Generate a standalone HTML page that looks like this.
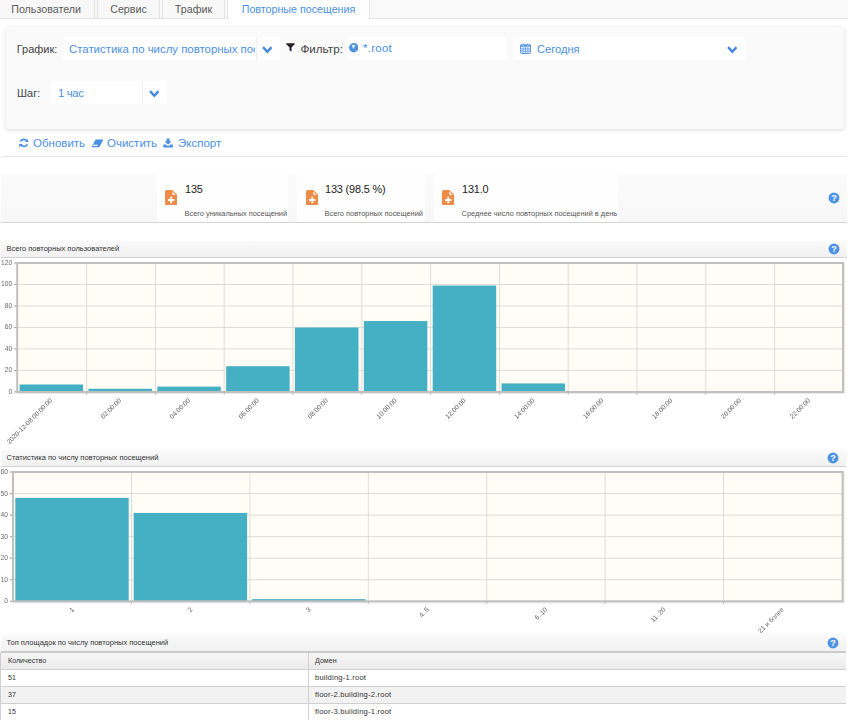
<!DOCTYPE html>
<html lang="ru">
<head>
<meta charset="utf-8">
<title>Повторные посещения</title>
<style>
*{box-sizing:border-box}
html,body{margin:0;padding:0;background:#fff}
body{width:848px;height:722px;overflow:hidden;position:relative;font-family:"Liberation Sans",sans-serif;font-size:11px;color:#444}
.abs{position:absolute}
/* tabs */
.tabstrip{position:absolute;left:0;top:0;width:848px;height:19px;background:#f9f9f9;border-bottom:1px solid #e4e4e4}
.tab{position:absolute;top:-4px;height:22px;background:#f8f8f8;border:1px solid #e2e2e2;border-bottom:none;border-radius:4px 4px 0 0;color:#5a5a5a;font-size:10.7px;line-height:25px;text-align:center;white-space:nowrap}
.tab.active{background:#fff;color:#4a90e2;height:23px}
/* filter panel */
.panel{position:absolute;left:6px;top:27px;width:838px;height:102px;background:#fafafa;border-radius:3px;box-shadow:0 1px 4px rgba(0,0,0,.15)}
.lbl{position:absolute;font-size:11px;color:#444;white-space:nowrap;line-height:14px}
.inp{position:absolute;background:#fff;border-radius:3px;height:23px;color:#4a90e2;font-size:11.4px;line-height:24.4px;white-space:nowrap;overflow:hidden}
.sep{position:absolute;top:0;width:1px;height:23px;background:#efefef}
.link{position:absolute;color:#4a90e2;font-size:11.5px;white-space:nowrap;line-height:14px}
/* stats */
.stats{position:absolute;left:1px;top:174px;width:846px;height:49px;background:linear-gradient(#fbfbfb,#f7f7f7);border-bottom:1px solid #d5d5d5}
.card{position:absolute;top:0;height:48px;background:#fefefe;border-radius:3px}
.card .num{position:absolute;left:28px;top:7.6px;font-size:10.9px;letter-spacing:-.15px;color:#222;line-height:14px;white-space:nowrap}
.card .sub{position:absolute;left:27.6px;top:35px;font-size:7.4px;color:#555;line-height:9px;white-space:nowrap}
.hdr{position:absolute;left:1px;width:845px;height:17px;background:linear-gradient(#fafafa,#f1f1f1);border-bottom:1px solid #d2d2d2;font-size:7.5px;color:#333;line-height:15px;padding-left:5.5px;white-space:nowrap}
.help{position:absolute;width:12px;height:12px}
svg text{font-family:"Liberation Sans",sans-serif}
/* table */
.tbl{position:absolute;left:0;top:652px;width:846px;height:68px;font-size:7.1px;color:#333;border-left:1px solid #cfcfcf}
.tr{position:absolute;left:0;width:845px;height:17px;border-bottom:1px solid #d0d0d0;line-height:16.5px}
.tr.h{height:18px;line-height:16.6px;border-top:1px solid #cbcbcb;background:linear-gradient(#f6f6f6,#ebebeb)}
.tr .c1{position:absolute;left:7px;top:0;white-space:nowrap}
.tr .c2{position:absolute;left:314px;top:0;white-space:nowrap}
.tr .dv{position:absolute;left:307px;top:0;width:1px;height:100%;background:#d0d0d0}
</style>
</head>
<body>

<!-- TABS -->
<div class="tabstrip">
  <div class="tab" style="left:-2.4px;width:97px">Пользователи</div>
  <div class="tab" style="left:97px;width:63px">Сервис</div>
  <div class="tab" style="left:162px;width:63px">Трафик</div>
  <div class="tab active" style="left:227px;width:143px">Повторные посещения</div>
</div>

<!-- FILTER PANEL -->
<div class="panel"></div>
<div class="lbl" style="left:16.7px;top:41.6px">График:</div>
<div class="inp" style="left:63px;top:37px;width:217px;padding-left:6px">
  <span style="display:inline-block;width:186px;overflow:hidden;vertical-align:top">Статистика по числу повторных посещений</span>
  <div class="sep" style="left:193px"></div>
  <svg class="abs" style="left:198.6px;top:8.8px" width="10.6" height="8" viewBox="0 0 10 7.2" preserveAspectRatio="none"><path d="M0.2 1.9 L1.8 0.3 L5 3.5 L8.2 0.3 L9.8 1.9 L5 6.7 Z" fill="#4288de"/></svg>
</div>
<svg class="abs" style="left:286px;top:43px" width="9" height="9" viewBox="0 0 9 9"><path d="M0.3 0.3 H8.7 V1.2 L5.5 4.6 V8.7 L3.5 7.2 V4.6 L0.3 1.2 Z" fill="#222"/></svg>
<div class="lbl" style="left:300.4px;top:41.6px;font-size:11.7px">Фильтр:</div>
<div class="inp" style="left:348px;top:37px;width:159px;padding-left:15px">
  <svg class="abs" style="left:0.6px;top:6.4px" width="9.5" height="9.5" viewBox="0 0 9.5 9.5"><circle cx="4.75" cy="4.75" r="4.7" fill="#4a90e2"/><path d="M3 2 C3.8 1.5 4.6 2.5 5.6 1.9 C6.6 2.2 6.4 3.2 5.7 3.8 C5.2 4.5 4.9 5.6 4.1 6 C3.5 5.3 3.9 4.4 3.2 3.8 C2.6 3.2 2.5 2.5 3 2 Z" fill="#fff" opacity=".8"/><path d="M5.9 7.3 C6.3 6.9 7 7 7.3 7.3 C7 7.9 6.2 8 5.9 7.3Z" fill="#fff" opacity=".75"/></svg>
  <span style="letter-spacing:.3px;position:relative;top:-1.1px">*.root</span>
</div>
<div class="inp" style="left:513px;top:37px;width:232px;padding-left:24px">
  <svg class="abs" style="left:6.6px;top:6.2px" width="11" height="11" viewBox="0 0 11 11"><rect x="0.6" y="1.7" width="9.8" height="8.7" rx=".8" fill="#fff" stroke="#4a90e2" stroke-width="1"/><rect x="0.6" y="1.7" width="9.8" height="2" fill="#4a90e2"/><path d="M3.1 3.7V10.4M5.5 3.7V10.4M7.9 3.7V10.4M0.6 5.9H10.4M0.6 8.1H10.4" stroke="#4a90e2" stroke-width=".75" fill="none"/><rect x="2.3" y="0.2" width="1.7" height="2.8" rx=".8" fill="#4a90e2" stroke="#fff" stroke-width=".45"/><rect x="7" y="0.2" width="1.7" height="2.8" rx=".8" fill="#4a90e2" stroke="#fff" stroke-width=".45"/></svg>
  <span style="font-size:11.1px">Сегодня</span>
  <svg class="abs" style="left:213.6px;top:8.8px" width="10.6" height="8" viewBox="0 0 10 7.2" preserveAspectRatio="none"><path d="M0.2 1.9 L1.8 0.3 L5 3.5 L8.2 0.3 L9.8 1.9 L5 6.7 Z" fill="#4288de"/></svg>
</div>

<div class="lbl" style="left:17px;top:85.6px">Шаг:</div>
<div class="inp" style="left:51px;top:81px;width:116px;padding-left:7px">
  <span style="letter-spacing:-.4px">1 час</span>
  <div class="sep" style="left:91px"></div>
  <svg class="abs" style="left:97.6px;top:8.8px" width="10.6" height="8" viewBox="0 0 10 7.2" preserveAspectRatio="none"><path d="M0.2 1.9 L1.8 0.3 L5 3.5 L8.2 0.3 L9.8 1.9 L5 6.7 Z" fill="#4288de"/></svg>
</div>

<!-- TOOLBAR -->
<svg class="abs" style="left:18.7px;top:138.2px" width="9.7" height="9.8" viewBox="0 0 9 10" preserveAspectRatio="none"><path d="M7.6 3.2 A3.6 3.6 0 0 0 1.2 3.6" fill="none" stroke="#4a90e2" stroke-width="1.7"/><path d="M1.4 6.8 A3.6 3.6 0 0 0 7.8 6.4" fill="none" stroke="#4a90e2" stroke-width="1.7"/><path d="M8.8 0.6 V4 H5.4 Z" fill="#4a90e2"/><path d="M0.2 9.4 V6 H3.6 Z" fill="#4a90e2"/></svg>
<div class="link" style="left:33px;top:136px">Обновить</div>
<svg class="abs" style="left:90.8px;top:138.6px" width="12.6" height="9" viewBox="0 0 12.6 9"><path d="M4.6 0.6 H12.3 L8.3 8.2 H0.4 Z" fill="#4a90e2"/><path d="M2.5 5.7 H7.1 L6.4 7.1 H1.8 Z" fill="#fff"/></svg>
<div class="link" style="left:107px;top:136px">Очистить</div>
<svg class="abs" style="left:163.4px;top:137.8px" width="10.2" height="9.8" viewBox="0 0 10 10" preserveAspectRatio="none"><path d="M3.6 0.4 H6.4 V3.4 H8.4 L5 6.8 L1.6 3.4 H3.6 Z" fill="#4a90e2"/><path d="M0.3 6.6 H2.8 L4 7.8 H6 L7.2 6.6 H9.7 V9.6 H0.3 Z" fill="#4a90e2"/></svg>
<div class="link" style="left:178px;top:136px">Экспорт</div>
<div class="abs" style="left:2px;top:156px;width:845px;height:1px;background:#e4e4e4"></div>

<!-- STATS -->
<div class="stats">
  <div class="card" style="left:156px;width:131px">
    <svg class="abs" style="left:7.9px;top:16.3px" width="12.2" height="15.2" viewBox="0 0 12.2 15.2"><path d="M1.5 0 H7.4 L12.2 4.8 V13.7 Q12.2 15.2 10.7 15.2 H1.5 Q0 15.2 0 13.7 V1.5 Q0 0 1.5 0 Z" fill="#ef8b48"/><path d="M7.2 1.3 L10.9 5 H8 Q7.2 5 7.2 4.2 Z" fill="#fde6d4"/><path d="M5.3 6.8 H7.1 V9.1 H9.4 V10.9 H7.1 V13.2 H5.3 V10.9 H3 V9.1 H5.3 Z" fill="#fff"/></svg>
    <div class="num">135</div>
    <div class="sub">Всего уникальных посещений</div>
  </div>
  <div class="card" style="left:296px;width:128px">
    <svg class="abs" style="left:8.9px;top:16.3px" width="12.2" height="15.2" viewBox="0 0 12.2 15.2"><path d="M1.5 0 H7.4 L12.2 4.8 V13.7 Q12.2 15.2 10.7 15.2 H1.5 Q0 15.2 0 13.7 V1.5 Q0 0 1.5 0 Z" fill="#ef8b48"/><path d="M7.2 1.3 L10.9 5 H8 Q7.2 5 7.2 4.2 Z" fill="#fde6d4"/><path d="M5.3 6.8 H7.1 V9.1 H9.4 V10.9 H7.1 V13.2 H5.3 V10.9 H3 V9.1 H5.3 Z" fill="#fff"/></svg>
    <div class="num">133 (98.5 %)</div>
    <div class="sub">Всего повторных посещений</div>
  </div>
  <div class="card" style="left:433px;width:184px">
    <svg class="abs" style="left:7.9px;top:16.3px" width="12.2" height="15.2" viewBox="0 0 12.2 15.2"><path d="M1.5 0 H7.4 L12.2 4.8 V13.7 Q12.2 15.2 10.7 15.2 H1.5 Q0 15.2 0 13.7 V1.5 Q0 0 1.5 0 Z" fill="#ef8b48"/><path d="M7.2 1.3 L10.9 5 H8 Q7.2 5 7.2 4.2 Z" fill="#fde6d4"/><path d="M5.3 6.8 H7.1 V9.1 H9.4 V10.9 H7.1 V13.2 H5.3 V10.9 H3 V9.1 H5.3 Z" fill="#fff"/></svg>
    <div class="num">131.0</div>
    <div class="sub">Среднее число повторных посещений в день</div>
  </div>
</div>
<svg class="help" style="left:828.4px;top:191.5px" viewBox="0 0 12 12"><circle cx="6" cy="6" r="5.45" fill="#4b92e4"/><text x="6.05" y="9.3" font-size="9.2" font-weight="bold" fill="#fff" text-anchor="middle">?</text></svg>

<!-- CHART 1 -->
<div class="hdr" style="top:241px;width:846px">Всего повторных пользователей</div>
<svg class="help" style="left:828.4px;top:242.5px" viewBox="0 0 12 12"><circle cx="6" cy="6" r="5.45" fill="#4b92e4"/><text x="6.05" y="9.3" font-size="9.2" font-weight="bold" fill="#fff" text-anchor="middle">?</text></svg>
<svg class="abs" id="chart1" style="left:0;top:258px;will-change:transform" width="848" height="190" viewBox="0 258 848 190">
  <rect x="18.2" y="264" width="825.8" height="129" fill="none" stroke="#000" stroke-opacity=".07" stroke-width="2.4"/>
  <rect x="17.2" y="263" width="825.8" height="129" fill="#fffdf6"/>
  <g stroke="#dcdcd6" stroke-width="1" fill="none"><path d="M13.7 284.48H843M13.7 305.96H843M13.7 327.44H843M13.7 348.92H843M13.7 370.4H843"/><path d="M86.6 263V394.5M155.4 263V394.5M224.2 263V394.5M293 263V394.5M361.8 263V394.5M430.6 263V394.5M499.4 263V394.5M568.2 263V394.5M637 263V394.5M705.8 263V394.5M774.6 263V394.5"/><path d="M13.7 263H17.2M13.7 391.88H17.2"/><path stroke="#a8a8a8" d="M14.2 263H16.2M14.2 284.48H16.2M14.2 305.96H16.2M14.2 327.44H16.2M14.2 348.92H16.2M14.2 370.4H16.2M14.2 391.88H16.2M86.6 393V394.2M155.4 393V394.2M224.2 393V394.2M293 393V394.2M361.8 393V394.2M430.6 393V394.2M499.4 393V394.2M568.2 393V394.2M637 393V394.2M705.8 393V394.2M774.6 393V394.2"/></g>
  <g fill="#45afc3">
    <rect x="19.6" y="384.48" width="63.5" height="7.53"/>
    <rect x="88.45" y="388.77" width="63.5" height="3.23"/>
    <rect x="157.3" y="386.62" width="63.5" height="5.38"/>
    <rect x="226.15" y="366.2" width="63.5" height="25.8"/>
    <rect x="295" y="327.5" width="63.5" height="64.5"/>
    <rect x="363.85" y="321.05" width="63.5" height="70.95"/>
    <rect x="432.7" y="285.57" width="63.5" height="106.42"/>
    <rect x="501.55" y="383.4" width="63.5" height="8.6"/>
  </g>
  <rect x="17.2" y="263" width="825.8" height="129" fill="none" stroke="#bfbfbf" stroke-width="2"/>
  <g font-size="6.7" fill="#6a6a6a" text-anchor="end">
    <text x="12.2" y="265">120</text>
    <text x="12.2" y="286.48">100</text>
    <text x="12.2" y="307.96">80</text>
    <text x="12.2" y="329.44">60</text>
    <text x="12.2" y="350.92">40</text>
    <text x="12.2" y="372.4">20</text>
    <text x="12.2" y="393.88">0</text>
  </g>
  <g font-size="6.6" fill="#606060" text-anchor="end">
    <text transform="translate(52.7,401) rotate(-45)">2020-12-08 00:00:00</text>
    <text transform="translate(121.6,401) rotate(-45)">02:00:00</text>
    <text transform="translate(190.5,401) rotate(-45)">04:00:00</text>
    <text transform="translate(259.4,401) rotate(-45)">06:00:00</text>
    <text transform="translate(328.3,401) rotate(-45)">08:00:00</text>
    <text transform="translate(397.2,401) rotate(-45)">10:00:00</text>
    <text transform="translate(466.1,401) rotate(-45)">12:00:00</text>
    <text transform="translate(535,401) rotate(-45)">14:00:00</text>
    <text transform="translate(603.9,401) rotate(-45)">16:00:00</text>
    <text transform="translate(672.8,401) rotate(-45)">18:00:00</text>
    <text transform="translate(741.7,401) rotate(-45)">20:00:00</text>
    <text transform="translate(810.6,401) rotate(-45)">22:00:00</text>
  </g>
</svg>

<!-- CHART 2 -->
<div class="hdr" style="top:450px">Статистика по числу повторных посещений</div>
<svg class="help" style="left:827.3px;top:451.5px" viewBox="0 0 12 12"><circle cx="6" cy="6" r="5.45" fill="#4b92e4"/><text x="6.05" y="9.3" font-size="9.2" font-weight="bold" fill="#fff" text-anchor="middle">?</text></svg>
<svg class="abs" id="chart2" style="left:0;top:467px;will-change:transform" width="848" height="167" viewBox="0 467 848 167">
  <rect x="14" y="473" width="829.6" height="129.3" fill="none" stroke="#000" stroke-opacity=".07" stroke-width="2.4"/>
  <rect x="13" y="472" width="829.6" height="129.3" fill="#fffdf6"/>
  <g stroke="#dcdcd6" stroke-width="1" fill="none"><path d="M9.5 493.55H842.6M9.5 515.1H842.6M9.5 536.65H842.6M9.5 558.2H842.6M9.5 579.75H842.6"/><path d="M131.5 472V603.8M249.9 472V603.8M368.3 472V603.8M486.7 472V603.8M605.1 472V603.8M723.5 472V603.8"/><path d="M9.5 472H13M9.5 601.3H13"/><path stroke="#a8a8a8" d="M10 472H12M10 493.55H12M10 515.1H12M10 536.65H12M10 558.2H12M10 579.75H12M10 601.3H12M131.5 602.3V603.5M249.9 602.3V603.5M368.3 602.3V603.5M486.7 602.3V603.5M605.1 602.3V603.5M723.5 602.3V603.5"/></g>
  <g fill="#45afc3">
    <rect x="15.3" y="497.86" width="113.4" height="103.44"/>
    <rect x="133.7" y="512.94" width="113.4" height="88.35"/>
    <rect x="252.1" y="599.14" width="113.4" height="2.15"/>
  </g>
  <rect x="13" y="472" width="829.6" height="129.3" fill="none" stroke="#bfbfbf" stroke-width="2"/>
  <g font-size="6.7" fill="#6a6a6a" text-anchor="end">
    <text x="8" y="474">60</text>
    <text x="8" y="495.55">50</text>
    <text x="8" y="517.1">40</text>
    <text x="8" y="538.65">30</text>
    <text x="8" y="560.2">20</text>
    <text x="8" y="581.75">10</text>
    <text x="8" y="603.3">0</text>
  </g>
  <g font-size="6.6" fill="#606060" text-anchor="end">
    <text transform="translate(74.7,610) rotate(-45)">1</text>
    <text transform="translate(192.95,610) rotate(-45)">2</text>
    <text transform="translate(311.2,610) rotate(-45)">3</text>
    <text transform="translate(429.45,610) rotate(-45)">4..5</text>
    <text transform="translate(547.7,610) rotate(-45)">6..10</text>
    <text transform="translate(665.95,610) rotate(-45)">11..20</text>
    <text transform="translate(784.2,610) rotate(-45)">21 и более</text>
  </g>
</svg>

<!-- TABLE -->
<div class="hdr" style="top:634px;height:18px;line-height:17px;border-bottom-color:#cbcbcb">Топ площадок по числу повторных посещений</div>
<svg class="help" style="left:827.1px;top:636.6px" viewBox="0 0 12 12"><circle cx="6" cy="6" r="5.45" fill="#4b92e4"/><text x="6.05" y="9.3" font-size="9.2" font-weight="bold" fill="#fff" text-anchor="middle">?</text></svg>
<div class="tbl">
  <div class="tr h" style="top:0"><span class="c1">Количество</span><div class="dv"></div><span class="c2">Домен</span></div>
  <div class="tr" style="top:18px;background:#fff"><span class="c1">51</span><div class="dv"></div><span class="c2" style="font-size:7.6px;letter-spacing:.2px">building-1.root</span></div>
  <div class="tr" style="top:35px;background:#f2f2f2"><span class="c1">37</span><div class="dv"></div><span class="c2" style="font-size:7.6px;letter-spacing:.2px">floor-2.building-2.root</span></div>
  <div class="tr" style="top:52px;background:#fff;border-bottom-color:#fff"><span class="c1">15</span><div class="dv"></div><span class="c2" style="font-size:7.6px;letter-spacing:.2px">floor-3.building-1.root</span></div>
</div>

</body>
</html>
